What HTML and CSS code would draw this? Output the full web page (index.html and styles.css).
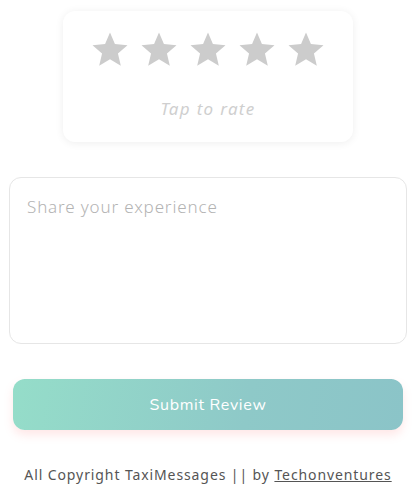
FILE: index.html
```html
<html lang="en">
<head>
  <meta charset="UTF-8">
  <meta name="viewport" content="width=device-width, initial-scale=1.0">
  <title>Rate your ride</title>
  <link rel="stylesheet" href="styles.css">
</head>
<body>
  <!-- Star rating card -->
  <div class="rating-card">
    <div class="stars">
      <svg class="star" viewBox="0 0 24 24"><path d="M12 17.27L18.18 21l-1.64-7.03L22 9.24l-7.19-.61L12 2 9.19 8.63 2 9.24l5.46 4.73L5.82 21z"/></svg>
      <svg class="star" viewBox="0 0 24 24"><path d="M12 17.27L18.18 21l-1.64-7.03L22 9.24l-7.19-.61L12 2 9.19 8.63 2 9.24l5.46 4.73L5.82 21z"/></svg>
      <svg class="star" viewBox="0 0 24 24"><path d="M12 17.27L18.18 21l-1.64-7.03L22 9.24l-7.19-.61L12 2 9.19 8.63 2 9.24l5.46 4.73L5.82 21z"/></svg>
      <svg class="star" viewBox="0 0 24 24"><path d="M12 17.27L18.18 21l-1.64-7.03L22 9.24l-7.19-.61L12 2 9.19 8.63 2 9.24l5.46 4.73L5.82 21z"/></svg>
      <svg class="star" viewBox="0 0 24 24"><path d="M12 17.27L18.18 21l-1.64-7.03L22 9.24l-7.19-.61L12 2 9.19 8.63 2 9.24l5.46 4.73L5.82 21z"/></svg>
    </div>
    <div class="rate-hint">Tap to rate</div>
  </div>

  <!-- Review text -->
  <div class="review-box">
    <textarea class="review-input" placeholder="Share your experience"></textarea>
  </div>

  <!-- Submit -->
  <div class="button-container">
    <button class="submit-btn">Submit Review</button>
  </div>

  <p class="footer">All Copyright TaxiMessages || by <a href="#">Techonventures</a></p>
</body>
</html>
```
FILE: styles.css
```css
body {
  margin: 0;
  background: #fff;
  font-family: "Noto Sans", sans-serif;
}

/* Rating card */
.rating-card {
  width: 290px;
  margin: 11px auto 0;
  height: 131px;
  box-sizing: border-box;
  padding-top: 18px;
  border-radius: 12px;
  background: #fff;
  box-shadow: 0 1px 8px rgba(0, 0, 0, 0.07);
}

.stars {
  display: flex;
  justify-content: center;
  gap: 7px;
}

.star {
  width: 42px;
  height: 42px;
  fill: #cccccc;
}

.rate-hint {
  margin-top: 26px;
  text-align: center;
  font-style: italic;
  font-size: 17px;
  letter-spacing: 1.3px;
  color: #cfcfcf;
}

/* Review textarea */
.review-box {
  padding: 35px 9px 0 9px;
}

.review-input {
  display: block;
  width: 100%;
  height: 167px;
  box-sizing: border-box;
  padding: 17px 17px;
  border: 1px solid #e6e6e6;
  border-radius: 12px;
  resize: none;
  font-family: "Noto Sans", sans-serif;
  font-size: 17px;
  font-weight: 300;
  color: #444;
  outline: none;
}

.review-input::placeholder {
  color: #b3b3b3;
  letter-spacing: 0.85px;
}

.button-container {
  padding: 35px 13px 0 13px;
}

.submit-btn {
  display: block;
  width: 100%;
  height: 51px;
  border: none;
  border-radius: 12px;
  background: linear-gradient(100deg, #95ddc9 0%, #8ec9c8 60%, #8bc4c8 100%);
  box-shadow: 0 5px 10px rgba(255, 120, 120, 0.18);
  color: #fff;
  font-family: "Nunito", "Noto Sans", sans-serif;
  font-size: 16px;
  letter-spacing: 0.7px;
}

.footer {
  margin: 35px 0 0;
  text-align: center;
  font-size: 14px;
  letter-spacing: 0.9px;
  color: #555;
}

.footer a {
  color: #555;
}
```
